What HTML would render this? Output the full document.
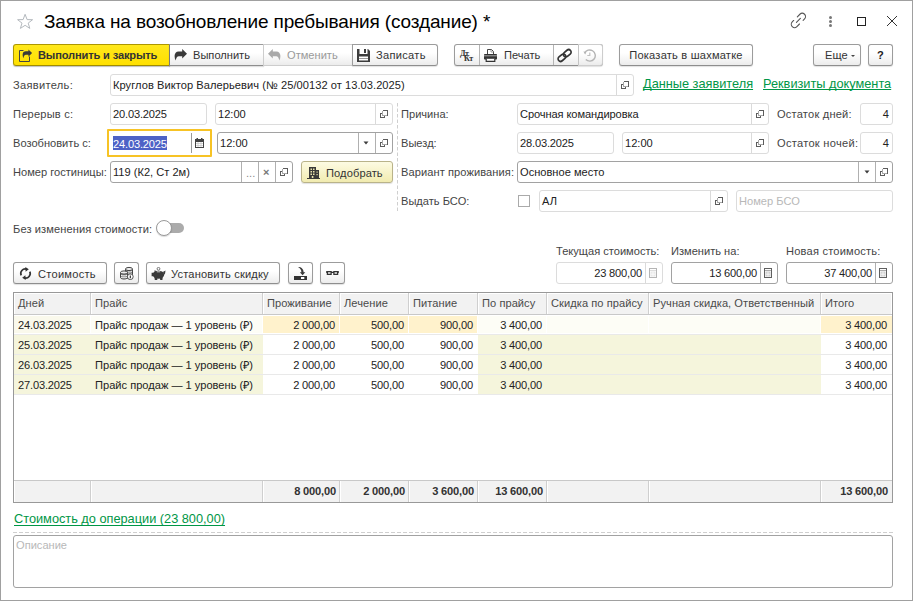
<!DOCTYPE html>
<html lang="ru">
<head>
<meta charset="utf-8">
<title>Заявка на возобновление пребывания</title>
<style>
*{box-sizing:border-box;margin:0;padding:0}
html,body{width:913px;height:601px;overflow:hidden;background:#fff}
body{font-family:"Liberation Sans",sans-serif;font-size:11.1px;color:#333;position:relative}
.a{position:absolute}
.win{left:0;top:0;width:913px;height:601px;border:1px solid #a0a0a0}
.title{left:44px;top:9px;font-size:19px;letter-spacing:-0.14px;line-height:25px;color:#000;white-space:nowrap}
.lbl{white-space:nowrap;line-height:14px;color:#444}
.btn{height:22px;border:1px solid #9c9c9c;border-bottom-color:#8e8e8e;border-radius:3px;background:linear-gradient(#fff 40%,#ececec);box-shadow:0 1px 1px rgba(0,0,0,.12);white-space:nowrap;line-height:20px;color:#333;text-align:center}
.inp{height:21px;border:1px solid #c6c6c6;border-radius:3px;background:#fff;white-space:nowrap;line-height:19px;color:#222;padding-left:2px;overflow:hidden}
.inp.ro{border-color:#dcdcdc}
.lnk{color:#009646;text-decoration:underline;text-decoration-thickness:1px;text-underline-offset:.5px;text-decoration-skip-ink:none;font-size:12.75px;line-height:15px;white-space:nowrap}
.sep{border-left:1px solid #d4d4d4;top:0;bottom:0;width:0}
.ph{color:#b8b8b8}
.num{text-align:right;padding-right:3px;padding-left:0}

.yb{background:linear-gradient(#ffe81c,#ffe000);border-color:#ad9700;border-bottom-color:#a08c00;box-shadow:0 1px 1px rgba(0,0,0,.25)}
.t{white-space:nowrap;line-height:13px;margin-top:1px}

.inp{height:22px;line-height:20px}
.inp.ed{border-color:#a2a2a2}
.vs{position:absolute;top:0;bottom:0;width:1px;background:#dadada}
.ed .vs{background:#b0b0b0}
.op{position:absolute;top:6px;width:8px;height:8px}
.L{left:13px}
.R{left:401px}
.dd{position:absolute;top:8px;width:7px;height:5px}
.cb{background:linear-gradient(#fdfbe3,#f1ebb0);border-color:#b9b38a}

.th{letter-spacing:.05px;position:absolute;top:293px;height:21px;background:#f2f2f2;border-left:1px solid #fff;border-top:1px solid #fff;line-height:19px;padding-left:3px;color:#4a4a4a;white-space:nowrap}
.c{position:absolute;height:19px;line-height:21px;white-space:nowrap;color:#222;overflow:hidden;background:transparent}
.c.n{text-align:right;padding-right:5px}
.c.l{padding-left:4px}
.tf{position:absolute;top:481px;height:21px;background:#f2f2f2;line-height:21px;text-align:right;padding-right:3px;font-weight:bold;color:#333;border-left:1px solid #fff}
.hl{position:absolute;left:14px;width:878px;height:1px;background:#e9e9e9}
.vl{position:absolute;width:1px;background:#cfcfcf}
.d{letter-spacing:-.17px}
</style>
</head>
<body>
<div class="a win"></div>

<!-- title -->
<svg class="a" style="left:16px;top:13px" width="18" height="17" viewBox="0 0 18 17"><path d="M9.100 1.300l2 5.300 5.500.1-4.400 3.400 1.600 5.300L9.100 12.300 4.400 15.400l1.600-5.300L1.600 6.700l5.500-.1z" fill="none" stroke="#b4b9be" stroke-width="1" stroke-linejoin="miter"/></svg>
<div class="a title">Заявка на возобновление пребывания (создание) *</div>

<svg class="a" style="left:790px;top:12px" width="17" height="17" viewBox="0 0 17 17"><g transform="translate(8.400,8.400) rotate(-45)" fill="none" stroke="#555" stroke-width="1.100" stroke-linecap="round"><path d="M1.800 -3.300H5.400A3.300 3.300 0 0 1 5.400 3.300H3.400"/><path d="M-1.800 3.300H-5.400A3.300 3.300 0 0 1 -5.400 -3.300H-3.400"/><path d="M-2.800 0H2.800"/></g></svg>
<div class="a" style="left:829px;top:16px;width:3px;height:3px;border-radius:2px;background:#777"></div>
<div class="a" style="left:829px;top:20px;width:3px;height:3px;border-radius:2px;background:#777"></div>
<div class="a" style="left:829px;top:24px;width:3px;height:3px;border-radius:2px;background:#777"></div>
<div class="a" style="left:857px;top:17px;width:9px;height:9px;border:1px solid #222"></div>
<svg class="a" style="left:886px;top:15px" width="12" height="12" viewBox="0 0 12 12"><path d="M1 1l10 10M11 1L1 11" stroke="#333" stroke-width="1"/></svg>


<!-- toolbar -->
<div class="a btn yb" style="left:13px;top:44px;width:157px;border-radius:3px 0 0 3px"></div>
<div class="a btn" style="left:169px;top:44px;width:95px;border-radius:0;border-left-color:#7a7a7a"></div>
<div class="a btn" style="left:263px;top:44px;width:90px;border-radius:0;border-color:#cdcdcd;box-shadow:none"></div>
<div class="a btn" style="left:352px;top:44px;width:86px;border-radius:0 3px 3px 0"></div>
<div class="a btn" style="left:454px;top:44px;width:149px"></div><div class="a btn" style="left:578px;top:44px;width:25px;border-color:#cdcdcd;border-left:0;border-radius:0 3px 3px 0;box-shadow:none"></div>
<div class="a btn" style="left:619px;top:44px;width:134px;letter-spacing:.2px">Показать в шахматке</div>
<div class="a btn" style="left:813px;top:44px;width:48px"></div>
<div class="a btn" style="left:868px;top:44px;width:25px;font-weight:bold;color:#222">?</div>

<!-- toolbar contents -->
<svg class="a" style="left:19px;top:49px" width="14" height="13" viewBox="0 0 14 13"><path d="M4.500 1.500H.5v11h10V7.500" fill="none" stroke="#444" stroke-width="1"/><g transform="translate(3.200,.4) scale(.76)"><path d="M8.200 0L13 4.700 8.200 9.600V7.200H4.800C3.200 7.200 2.300 8.500 1.600 11.600 -.6 6 1 2.400 4.600 2.400H8.200z" fill="#3a3a3a"/></g></svg>
<div class="a t" style="left:38px;top:48px;font-weight:bold;color:#333;letter-spacing:-0.15px">Выполнить и закрыть</div>
<svg class="a" style="left:174px;top:49px" width="13" height="12" viewBox="0 0 13 12"><path d="M8.200 0L13 4.700 8.200 9.600V7.200H4.800C3.200 7.200 2.300 8.500 1.600 11.600 -.6 6 1 2.400 4.600 2.400H8.200z" fill="#3a3a3a"/></svg>
<div class="a t" style="left:193px;top:48px">Выполнить</div>
<svg class="a" style="left:268px;top:49px" width="13" height="12" viewBox="0 0 13 12"><path d="M4.800 0L0 4.700 4.800 9.600V7.200H8.200C9.800 7.200 10.700 8.500 11.400 11.600 13.600 6 12 2.400 8.400 2.400H4.800z" fill="#a9a9a9"/></svg>
<div class="a t" style="left:287px;top:48px;color:#9a9a9a">Отменить</div>
<svg class="a" style="left:357px;top:49px" width="13" height="13" viewBox="0 0 13 13"><path d="M0 0h2.500v5h8V0H11l2 2v11H0z" fill="#3c3c3c"/><rect x="7" y="0" width="2" height="4" fill="#3c3c3c"/><rect x="2" y="7.500" width="9" height="4.500" fill="#fff"/><rect x="2" y="9" width="9" height="1" fill="#999"/><rect x="2" y="11" width="9" height="1" fill="#999"/></svg>
<div class="a t" style="left:376px;top:48px;letter-spacing:.3px">Записать</div>

<div class="a" style="left:479px;top:45px;width:1px;height:20px;background:#b4b4b4"></div>
<div class="a" style="left:553px;top:45px;width:1px;height:20px;background:#b4b4b4"></div>
<div class="a" style="left:578px;top:45px;width:1px;height:20px;background:#c4c4c4"></div>
<div class="a" style="left:460px;top:50px;font-family:'Liberation Serif',serif;font-size:8px;line-height:8px;font-weight:bold;color:#333;letter-spacing:-0.5px">Дт</div><div class="a" style="left:464px;top:55px;font-family:'Liberation Serif',serif;font-size:8px;line-height:8px;font-weight:bold;color:#333;letter-spacing:-0.3px">Кт</div>
<svg class="a" style="left:484px;top:49px" width="13" height="13" viewBox="0 0 13 13"><path d="M3.500 5.500V.5h4l2 2v3" fill="#fff" stroke="#444" stroke-width="1"/><path d="M7 .5v2.500h2.500" fill="none" stroke="#888" stroke-width=".8"/><rect x="0" y="5" width="13" height="5.500" rx=".8" fill="#333"/><rect x="0" y="6.300" width="13" height="1" fill="#aaa"/><path d="M2.200 9.800v2.600h8.600V9.800" fill="#fff" stroke="#333" stroke-width="1.200"/></svg>
<div class="a t" style="left:504px;top:48px">Печать</div>
<svg class="a" style="left:557px;top:48px" width="15" height="15" viewBox="0 0 15 15"><g transform="translate(7.600,7.500) rotate(-40)" fill="none" stroke="#333" stroke-width="1.700"><rect x="-7.700" y="-2.500" width="8.600" height="5" rx="2.500"/><rect x="-.9" y="-2.500" width="8.600" height="5" rx="2.500"/></g></svg>
<svg class="a" style="left:583px;top:49px" width="14" height="14" viewBox="0 0 14 14"><path d="M1.600 4.200A5.600 5.600 0 1 1 2.800 10.600" fill="none" stroke="#b4b4b4" stroke-width="1.400"/><path d="M6.800 3.500v3H4.300" fill="none" stroke="#c0c0c0" stroke-width="1.200"/><path d="M.4 2.400l3 .4-1.200 2.800z" fill="#b4b4b4"/></svg>
<div class="a t" style="left:825px;top:48px">Еще</div>
<div class="a" style="left:851px;top:55px;width:0;height:0;border:2px solid transparent;border-top:2px solid #444"></div>



<!-- form -->
<div class="a lbl L" style="top:78px;letter-spacing:.3px">Заявитель:</div>
<div class="a inp ro" style="left:110px;top:74px;width:524px;letter-spacing:.05px">Круглов Виктор Валерьевич (№ 25/00132 от 13.03.2025)<i class="vs" style="left:505px"></i><svg class="op" shape-rendering="crispEdges" style="left:510px" viewBox="0 0 8 8"><path d="M2.500 3.500H.5v4h4V5.500" fill="none" stroke="#5c5c5c"/><path d="M2.500 5.500V.5" fill="none" stroke="#a8a8a8"/><path d="M2.500 5.500h5" fill="none" stroke="#a8a8a8"/><path d="M2.500 .5h5v5" fill="none" stroke="#5c5c5c"/></svg></div>
<div class="a lnk" style="left:643px;top:76px">Данные заявителя</div>
<div class="a lnk" style="left:763px;top:76px">Реквизиты документа</div>

<div class="a lbl L" style="top:107px;letter-spacing:.2px">Перерыв с:</div>
<div class="a inp ro" style="left:110px;top:103px;width:97px"><span class="d">20.03.2025</span></div>
<div class="a inp ro" style="left:215px;top:103px;width:178px">12:00<i class="vs" style="left:159px"></i><svg class="op" shape-rendering="crispEdges" style="left:164px" viewBox="0 0 8 8"><path d="M2.500 3.500H.5v4h4V5.500" fill="none" stroke="#5c5c5c"/><path d="M2.500 5.500V.5" fill="none" stroke="#a8a8a8"/><path d="M2.500 5.500h5" fill="none" stroke="#a8a8a8"/><path d="M2.500 .5h5v5" fill="none" stroke="#5c5c5c"/></svg></div>

<div class="a lbl L" style="top:136px">Возобновить с:</div>
<div class="a" style="left:107px;top:129px;width:105px;height:28px;border:2px solid #f7c325;border-radius:1px"></div>
<div class="a" style="left:113px;top:136px;width:54px;height:14px;background:#4d62c6"></div>
<div class="a t" style="left:113px;top:136px;color:#fff;line-height:14px;letter-spacing:-.17px">24.03.2025</div>
<div class="a" style="left:191px;top:133px;width:1px;height:20px;background:#999"></div>
<svg class="a" style="left:195px;top:138px" width="9" height="10" viewBox="0 0 9 10"><rect x=".5" y="1.500" width="8" height="8" fill="#fff" stroke="#444"/><rect x="0" y="1" width="9" height="3" fill="#444"/><rect x="1.500" y="0" width="1.500" height="2" fill="#444"/><rect x="6" y="0" width="1.500" height="2" fill="#444"/><path d="M1 5.500h7M1 7.500h7M3 4v5M6 4v5" stroke="#bbb" stroke-width=".6"/></svg>
<div class="a inp ed" style="left:217px;top:132px;width:176px">12:00<i class="vs" style="left:140px"></i><i class="vs" style="left:157px"></i><svg class="dd" style="left:144px" viewBox="0 0 7 5"><path d="M1.500 .5h5L4 3.500z" fill="#3c3c3c"/></svg><svg class="op" shape-rendering="crispEdges" style="left:162px" viewBox="0 0 8 8"><path d="M2.500 3.500H.5v4h4V5.500" fill="none" stroke="#5c5c5c"/><path d="M2.500 5.500V.5" fill="none" stroke="#a8a8a8"/><path d="M2.500 5.500h5" fill="none" stroke="#a8a8a8"/><path d="M2.500 .5h5v5" fill="none" stroke="#5c5c5c"/></svg></div>

<div class="a lbl L" style="top:165px">Номер гостиницы:</div>
<div class="a inp ed" style="left:110px;top:161px;width:183px">119 (К2, Ст 2м)<i class="vs" style="left:130px"></i><i class="vs" style="left:147px"></i><i class="vs" style="left:164px"></i><span class="a" style="left:135px;top:1px;color:#888">...</span><span class="a" style="left:152px;top:0;color:#777;font-size:11px;font-weight:bold">×</span><svg class="op" shape-rendering="crispEdges" style="left:169px" viewBox="0 0 8 8"><path d="M2.500 3.500H.5v4h4V5.500" fill="none" stroke="#5c5c5c"/><path d="M2.500 5.500V.5" fill="none" stroke="#a8a8a8"/><path d="M2.500 5.500h5" fill="none" stroke="#a8a8a8"/><path d="M2.500 .5h5v5" fill="none" stroke="#5c5c5c"/></svg></div>
<div class="a btn cb" style="left:301px;top:161px;width:92px"></div>
<svg class="a" style="left:307px;top:166px" width="13" height="13" viewBox="0 0 13 13"><path d="M2 12V1h7v3h3v8z" fill="#3a3a3a"/><path d="M0 12.500h13" stroke="#3a3a3a"/><g fill="#e8e3b0"><rect x="3.500" y="2.500" width="1.500" height="1.500"/><rect x="6" y="2.500" width="1.500" height="1.500"/><rect x="3.500" y="5" width="1.500" height="1.500"/><rect x="6" y="5" width="1.500" height="1.500"/><rect x="3.500" y="7.500" width="1.500" height="1.500"/><rect x="6" y="7.500" width="1.500" height="1.500"/><rect x="9.500" y="5.500" width="1.200" height="1.200"/><rect x="9.500" y="8" width="1.200" height="1.200"/><rect x="4.800" y="10" width="1.600" height="2"/></g></svg>
<div class="a t" style="left:326px;top:166px;letter-spacing:.1px">Подобрать</div>

<svg class="a" style="left:397px;top:103px" width="1" height="109"><path d="M.5 0v109" stroke="#cfcfcf" stroke-dasharray="3.500 2"/></svg>

<div class="a lbl R" style="top:107px">Причина:</div>
<div class="a inp ro" style="left:517px;top:103px;width:252px;letter-spacing:-.1px">Срочная командировка<i class="vs" style="left:233px"></i><svg class="op" shape-rendering="crispEdges" style="left:238px" viewBox="0 0 8 8"><path d="M2.500 3.500H.5v4h4V5.500" fill="none" stroke="#5c5c5c"/><path d="M2.500 5.500V.5" fill="none" stroke="#a8a8a8"/><path d="M2.500 5.500h5" fill="none" stroke="#a8a8a8"/><path d="M2.500 .5h5v5" fill="none" stroke="#5c5c5c"/></svg></div>
<div class="a lbl" style="left:777px;top:107px;letter-spacing:.2px">Остаток дней:</div>
<div class="a inp ro num" style="left:860px;top:103px;width:33px">4</div>

<div class="a lbl R" style="top:136px">Выезд:</div>
<div class="a inp ro" style="left:517px;top:132px;width:97px"><span class="d">28.03.2025</span></div>
<div class="a inp ro" style="left:622px;top:132px;width:147px">12:00<i class="vs" style="left:128px"></i><svg class="op" shape-rendering="crispEdges" style="left:133px" viewBox="0 0 8 8"><path d="M2.500 3.500H.5v4h4V5.500" fill="none" stroke="#5c5c5c"/><path d="M2.500 5.500V.5" fill="none" stroke="#a8a8a8"/><path d="M2.500 5.500h5" fill="none" stroke="#a8a8a8"/><path d="M2.500 .5h5v5" fill="none" stroke="#5c5c5c"/></svg></div>
<div class="a lbl" style="left:777px;top:136px;letter-spacing:.28px">Остаток ночей:</div>
<div class="a inp ro num" style="left:860px;top:132px;width:33px">4</div>

<div class="a lbl R" style="top:165px;letter-spacing:.08px">Вариант проживания:</div>
<div class="a inp ed" style="left:517px;top:161px;width:376px">Основное место<i class="vs" style="left:340px"></i><i class="vs" style="left:357px"></i><svg class="dd" style="left:345px" viewBox="0 0 7 5"><path d="M1.500 .5h5L4 3.500z" fill="#3c3c3c"/></svg><svg class="op" shape-rendering="crispEdges" style="left:362px" viewBox="0 0 8 8"><path d="M2.500 3.500H.5v4h4V5.500" fill="none" stroke="#5c5c5c"/><path d="M2.500 5.500V.5" fill="none" stroke="#a8a8a8"/><path d="M2.500 5.500h5" fill="none" stroke="#a8a8a8"/><path d="M2.500 .5h5v5" fill="none" stroke="#5c5c5c"/></svg></div>

<div class="a lbl R" style="top:194px">Выдать БСО:</div>
<div class="a" style="left:518px;top:195px;width:12px;height:12px;border:1px solid #aaa;background:#fff"></div>
<div class="a inp ro" style="left:539px;top:190px;width:189px">АЛ<i class="vs" style="left:170px"></i><svg class="op" shape-rendering="crispEdges" style="left:175px" viewBox="0 0 8 8"><path d="M2.500 3.500H.5v4h4V5.500" fill="none" stroke="#5c5c5c"/><path d="M2.500 5.500V.5" fill="none" stroke="#a8a8a8"/><path d="M2.500 5.500h5" fill="none" stroke="#a8a8a8"/><path d="M2.500 .5h5v5" fill="none" stroke="#5c5c5c"/></svg></div>
<div class="a inp ro ph" style="left:736px;top:190px;width:157px">Номер БСО</div>

<div class="a lbl L" style="top:222px;letter-spacing:.1px">Без изменения стоимости:</div>
<div class="a" style="left:162px;top:223px;width:22px;height:10px;border-radius:5px;background:#ababab"></div>
<div class="a" style="left:156px;top:220px;width:16px;height:16px;border-radius:8px;background:#fff;border:1px solid #999;box-shadow:0 1px 1px rgba(0,0,0,.15)"></div>


<!-- row of buttons above table -->
<div class="a btn" style="left:13px;top:262px;width:94px"></div>
<div class="a t" style="left:38px;top:267px;letter-spacing:.25px">Стоимость</div>
<div class="a btn" style="left:114px;top:262px;width:25px"></div>
<div class="a btn" style="left:146px;top:262px;width:134px"></div>
<div class="a t" style="left:171px;top:267px;letter-spacing:.17px">Установить скидку</div>
<div class="a btn" style="left:288px;top:262px;width:25px"></div>
<div class="a btn" style="left:320px;top:262px;width:25px"></div>

<svg class="a" style="left:19px;top:267px" width="13" height="13" viewBox="0 0 13 13"><g fill="none" stroke="#333" stroke-width="1.700"><path d="M2.200 8.300A4.500 4.500 0 0 1 7.500 2.100"/><path d="M10.800 4.700A4.500 4.500 0 0 1 5.500 10.900"/></g><path d="M6.300 0l3.500 2.300-3.200 2.500z" fill="#333"/><path d="M6.700 13l-3.500-2.300 3.200-2.500z" fill="#333"/></svg>
<svg class="a" style="left:120px;top:266px" width="14" height="14" viewBox="0 0 14 14"><g stroke="#444" stroke-width="1"><path d="M5.500 3v8c0 .9 1.600 1.500 3.500 1.500s3.500-.6 3.500-1.500V3" fill="#8a8a8a"/><ellipse cx="9" cy="3" rx="3.500" ry="1.600" fill="#eee"/><path d="M.5 6.500v5c0 .9 1.600 1.500 3.500 1.500s3.500-.6 3.500-1.500v-5" fill="#8a8a8a"/><ellipse cx="4" cy="6.500" rx="3.500" ry="1.600" fill="#eee"/></g><path d="M1 9.300c.8.800 5.200.8 6 0M1 11.200c.8.800 5.200.8 6 0M8 5.800c1.800.3 3.500 0 4-.6M8 8c1.800.3 3.500 0 4-.6" fill="none" stroke="#fff" stroke-width=".9"/><circle cx="10.300" cy="10.700" r="2.900" fill="#fff" stroke="#444" stroke-width=".9"/><path d="M10.300 10v2.300M10.300 8.700v.7" stroke="#222" stroke-width="1.100"/></svg>
<svg class="a" style="left:151px;top:267px" width="15" height="14" viewBox="0 0 15 14"><ellipse cx="7.500" cy="7.700" rx="5.700" ry="4" fill="#3a3a3a"/><path d="M3.300 9.500h3v3.500H3.800zM8.800 9.500h3l-.4 3.500H9.200z" fill="#3a3a3a"/><path d="M.6 5.800h2.600v3.400H.6zM11.800 5l2.700-1.600-.6 4.400z" fill="#3a3a3a"/><path d="M3.500 3.200l2 .9-1.800 1.500z" fill="#3a3a3a"/><circle cx="7.500" cy="1.800" r="1.400" fill="#fff" stroke="#666" stroke-width=".9"/><path d="M5.800 4.800h3.500" stroke="#ddd" stroke-width=".9"/></svg>
<svg class="a" style="left:294px;top:266px" width="14" height="14" viewBox="0 0 14 14"><rect x="0" y="10" width="13" height="4" fill="#333"/><rect x="7" y="11" width="3.300" height="2" fill="#fff"/><path d="M4 1c3.500 0 5.500 2 5.600 5.200h1.700L8.600 9.200 5.800 6.200h1.600C7.300 3.800 6.300 2.200 4 1z" fill="#3a3a3a"/></svg>
<svg class="a" style="left:326px;top:271px" width="13" height="4" viewBox="0 0 13 4"><g fill="none" stroke="#333" stroke-width="1.300"><rect x="1.400" y=".65" width="3.700" height="2.700"/><rect x="7.900" y=".65" width="3.700" height="2.700"/><path d="M5 1.300h3M0 1h1.400M11.600 1H13"/></g></svg>

<div class="a lbl" style="left:556px;top:244px">Текущая стоимость:</div>
<div class="a lbl" style="left:671px;top:244px">Изменить на:</div>
<div class="a lbl" style="left:786px;top:244px;letter-spacing:.2px">Новая стоимость:</div>
<div class="a inp ro num" style="left:556px;top:262px;width:107px;padding-right:20px;letter-spacing:-.17px">23 800,00<i class="vs" style="left:88px"></i><svg class="a" style="left:92px;top:5px" width="8" height="10" viewBox="0 0 8 10"><rect x=".5" y=".5" width="7" height="9" fill="#fff" stroke="#b5b5b5"/><path d="M1 2.500h6" stroke="#dcdcdc"/><rect x="1.500" y="3.500" width="5" height="5" fill="#e8e8e8"/><path d="M2 6.200h4M4 4v4.500" stroke="#fff" stroke-width=".7"/></svg></div>
<div class="a inp ed num" style="left:671px;top:262px;width:107px;padding-right:20px;letter-spacing:-.17px">13 600,00<i class="vs" style="left:88px"></i><svg class="a" style="left:92px;top:5px" width="8" height="10" viewBox="0 0 8 10"><rect x=".5" y=".5" width="7" height="9" fill="#fff" stroke="#606060"/><path d="M1 2.500h6" stroke="#aaa"/><rect x="1.500" y="3.500" width="5" height="5" fill="#d0d0d0"/><path d="M2 6.200h4M4 4v4.500" stroke="#fff" stroke-width=".7"/></svg></div>
<div class="a inp ed num" style="left:786px;top:262px;width:107px;padding-right:20px;letter-spacing:-.17px">37 400,00<i class="vs" style="left:88px"></i><svg class="a" style="left:92px;top:5px" width="8" height="10" viewBox="0 0 8 10"><rect x=".5" y=".5" width="7" height="9" fill="#fff" stroke="#606060"/><path d="M1 2.500h6" stroke="#aaa"/><rect x="1.500" y="3.500" width="5" height="5" fill="#d0d0d0"/><path d="M2 6.200h4M4 4v4.500" stroke="#fff" stroke-width=".7"/></svg></div>
<!-- table -->
<div class="a" style="left:13px;top:292px;width:880px;height:211px;border:1px solid #999;background:#fff"></div>
<div class="a" style="left:14px;top:293px;width:878px;height:21px;background:#fff"></div>
<div class="th" style="left:14px;width:76px">Дней</div>
<div class="th" style="left:91px;width:171px">Прайс</div>
<div class="th" style="left:263px;width:76px">Проживание</div>
<div class="th" style="left:340px;width:68px">Лечение</div>
<div class="th" style="left:409px;width:68px">Питание</div>
<div class="th" style="left:478px;width:68px">По прайсу</div>
<div class="th" style="left:547px;width:101px">Скидка по прайсу</div>
<div class="th" style="left:649px;width:171px">Ручная скидка, Ответственный</div>
<div class="th" style="left:821px;width:70px">Итого</div>
<div class="vl" style="left:90px;top:293px;height:21px"></div>
<div class="vl" style="left:262px;top:293px;height:21px"></div>
<div class="vl" style="left:339px;top:293px;height:21px"></div>
<div class="vl" style="left:408px;top:293px;height:21px"></div>
<div class="vl" style="left:477px;top:293px;height:21px"></div>
<div class="vl" style="left:546px;top:293px;height:21px"></div>
<div class="vl" style="left:648px;top:293px;height:21px"></div>
<div class="vl" style="left:820px;top:293px;height:21px"></div>
<div class="hl" style="top:314px;background:#c8c8c8"></div>
<div class="a" style="left:14px;top:316px;width:76px;height:17px;background:#faf9ec"></div>
<div class="a" style="left:91px;top:316px;width:171px;height:17px;background:#fdfdf6"></div>
<div class="a" style="left:263px;top:316px;width:76px;height:17px;background:#fff2cc"></div>
<div class="a" style="left:340px;top:316px;width:68px;height:17px;background:#fff2cc"></div>
<div class="a" style="left:409px;top:316px;width:68px;height:17px;background:#fff2cc"></div>
<div class="a" style="left:478px;top:316px;width:68px;height:17px;background:#fdfdf6"></div>
<div class="a" style="left:547px;top:316px;width:101px;height:17px;background:#fdfdf6"></div>
<div class="a" style="left:649px;top:316px;width:171px;height:17px;background:#fdfdf6"></div>
<div class="a" style="left:821px;top:316px;width:71px;height:17px;background:#fff2cc"></div>
<div class="c l d" style="left:14px;top:315px;width:77px">24.03.2025</div>
<div class="c l" style="left:91px;top:315px;width:172px">Прайс продаж — 1 уровень (₽)</div>
<div class="c n d" style="left:263px;top:315px;width:77px">2 000,00</div>
<div class="c n d" style="left:340px;top:315px;width:69px">500,00</div>
<div class="c n d" style="left:409px;top:315px;width:69px">900,00</div>
<div class="c n d" style="left:478px;top:315px;width:69px">3 400,00</div>
<div class="c n d" style="left:821px;top:315px;width:71px">3 400,00</div>
<div class="hl" style="top:334px"></div>
<div class="a" style="left:14px;top:335px;width:249px;height:19px;background:#f5f5dc"></div>
<div class="a" style="left:478px;top:335px;width:343px;height:19px;background:#f5f5dc"></div>
<div class="c l d" style="left:14px;top:335px;width:77px">25.03.2025</div>
<div class="c l" style="left:91px;top:335px;width:172px">Прайс продаж — 1 уровень (₽)</div>
<div class="c n d" style="left:263px;top:335px;width:77px">2 000,00</div>
<div class="c n d" style="left:340px;top:335px;width:69px">500,00</div>
<div class="c n d" style="left:409px;top:335px;width:69px">900,00</div>
<div class="c n d" style="left:478px;top:335px;width:69px">3 400,00</div>
<div class="c n d" style="left:821px;top:335px;width:71px">3 400,00</div>
<div class="hl" style="top:354px"></div>
<div class="a" style="left:14px;top:355px;width:249px;height:19px;background:#f5f5dc"></div>
<div class="a" style="left:478px;top:355px;width:343px;height:19px;background:#f5f5dc"></div>
<div class="c l d" style="left:14px;top:355px;width:77px">26.03.2025</div>
<div class="c l" style="left:91px;top:355px;width:172px">Прайс продаж — 1 уровень (₽)</div>
<div class="c n d" style="left:263px;top:355px;width:77px">2 000,00</div>
<div class="c n d" style="left:340px;top:355px;width:69px">500,00</div>
<div class="c n d" style="left:409px;top:355px;width:69px">900,00</div>
<div class="c n d" style="left:478px;top:355px;width:69px">3 400,00</div>
<div class="c n d" style="left:821px;top:355px;width:71px">3 400,00</div>
<div class="hl" style="top:374px"></div>
<div class="a" style="left:14px;top:375px;width:249px;height:19px;background:#f5f5dc"></div>
<div class="a" style="left:478px;top:375px;width:343px;height:19px;background:#f5f5dc"></div>
<div class="c l d" style="left:14px;top:375px;width:77px">27.03.2025</div>
<div class="c l" style="left:91px;top:375px;width:172px">Прайс продаж — 1 уровень (₽)</div>
<div class="c n d" style="left:263px;top:375px;width:77px">2 000,00</div>
<div class="c n d" style="left:340px;top:375px;width:69px">500,00</div>
<div class="c n d" style="left:409px;top:375px;width:69px">900,00</div>
<div class="c n d" style="left:478px;top:375px;width:69px">3 400,00</div>
<div class="c n d" style="left:821px;top:375px;width:71px">3 400,00</div>
<div class="hl" style="top:394px"></div>
<div class="hl" style="top:480px;background:#c8c8c8"></div>
<div class="a" style="left:14px;top:481px;width:878px;height:21px;background:#f2f2f2"></div>
<div class="tf d" style="left:14px;width:76px"></div>
<div class="tf d" style="left:91px;width:171px"></div>
<div class="tf d" style="left:263px;width:76px">8 000,00</div>
<div class="tf d" style="left:340px;width:68px">2 000,00</div>
<div class="tf d" style="left:409px;width:68px">3 600,00</div>
<div class="tf d" style="left:478px;width:68px">13 600,00</div>
<div class="tf d" style="left:547px;width:101px"></div>
<div class="tf d" style="left:649px;width:171px"></div>
<div class="tf d" style="left:821px;width:70px">13 600,00</div>
<div class="vl" style="left:90px;top:481px;height:21px"></div>
<div class="vl" style="left:262px;top:481px;height:21px"></div>
<div class="vl" style="left:339px;top:481px;height:21px"></div>
<div class="vl" style="left:408px;top:481px;height:21px"></div>
<div class="vl" style="left:477px;top:481px;height:21px"></div>
<div class="vl" style="left:546px;top:481px;height:21px"></div>
<div class="vl" style="left:648px;top:481px;height:21px"></div>
<div class="vl" style="left:820px;top:481px;height:21px"></div>
<div class="a lnk" style="left:14px;top:511px;text-underline-offset:1.500px">Стоимость до операции (23 800,00)</div>
<svg class="a" style="left:13px;top:532px" width="880" height="1"><path d="M0 .5h880" stroke="#cfcfcf" stroke-dasharray="4 2"/></svg>
<div class="a" style="left:13px;top:535px;width:880px;height:53px;border:1px solid #a2a2a2;border-radius:3px;background:#fff"></div>
<div class="a t ph" style="left:16px;top:538px">Описание</div>

</body>
</html>
